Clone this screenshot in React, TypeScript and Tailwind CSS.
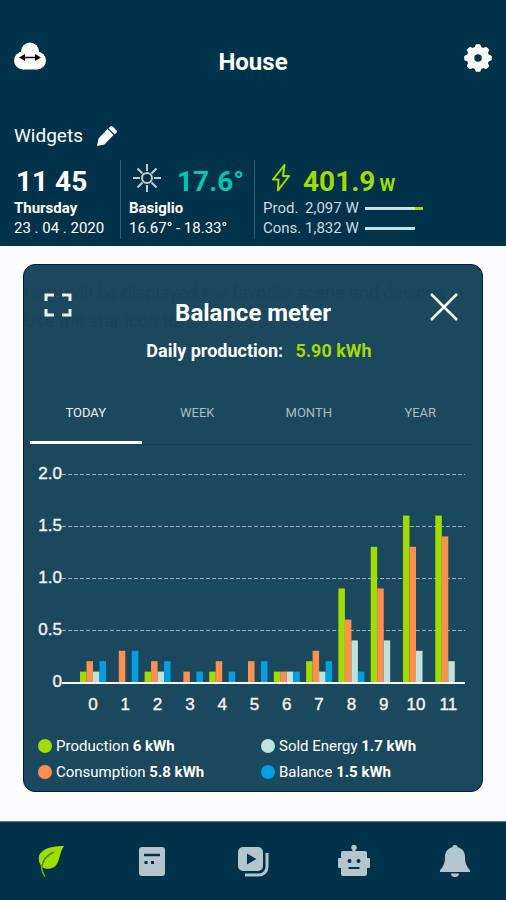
import React, { useState } from "react";
import clsx from "clsx";

type HourEntry = {
  production: number;
  consumption: number;
  sold: number;
  balance: number;
};

const hours: HourEntry[] = [
  { production: 0.1, consumption: 0.2, sold: 0.1, balance: 0.2 },
  { production: 0, consumption: 0.3, sold: 0, balance: 0.3 },
  { production: 0.1, consumption: 0.2, sold: 0.1, balance: 0.2 },
  { production: 0, consumption: 0.1, sold: 0, balance: 0.1 },
  { production: 0.1, consumption: 0.2, sold: 0, balance: 0.1 },
  { production: 0, consumption: 0.2, sold: 0, balance: 0.2 },
  { production: 0.1, consumption: 0.1, sold: 0.1, balance: 0.1 },
  { production: 0.2, consumption: 0.3, sold: 0.1, balance: 0.2 },
  { production: 0.9, consumption: 0.6, sold: 0.4, balance: 0.1 },
  { production: 1.3, consumption: 0.9, sold: 0.4, balance: 0 },
  { production: 1.6, consumption: 1.3, sold: 0.3, balance: 0 },
  { production: 1.6, consumption: 1.4, sold: 0.2, balance: 0 },
];

const series: { key: keyof HourEntry; color: string }[] = [
  { key: "production", color: "#a0dc00" },
  { key: "consumption", color: "#ff9052" },
  { key: "sold", color: "#bfe3da" },
  { key: "balance", color: "#009ee3" },
];

const legend = [
  { label: "Production", value: "6 kWh", dot: "bg-[#a0dc00]" },
  { label: "Sold Energy", value: "1.7 kWh", dot: "bg-[#bfe3da]" },
  { label: "Consumption", value: "5.8 kWh", dot: "bg-[#ff9052]" },
  { label: "Balance", value: "1.5 kWh", dot: "bg-[#009ee3]" },
];

const tabs = ["TODAY", "WEEK", "MONTH", "YEAR"];

const CloudIcon = () => (
  <svg viewBox="0 0 32 28" className="h-7 w-8">
    <circle cx="16" cy="9.500" r="9" fill="#fff" />
    <circle cx="9" cy="18.500" r="9" fill="#fff" />
    <circle cx="23" cy="18.500" r="9" fill="#fff" />
    <path d="M9 14h14v13.500H9z" fill="#fff" />
    <path d="M8 15.500h16" stroke="#000" strokeWidth="1.500" />
    <path d="M5 15.500l6-3.500v7zM27 15.500l-6-3.500v7z" fill="#000" />
  </svg>
);

const GearIcon = () => (
  <svg viewBox="0 0 28 28" className="size-7">
    <circle cx="14" cy="14" r="7.500" fill="none" stroke="#fff" strokeWidth="7.500" />
    {[0, 45, 90, 135, 180, 225, 270, 315].map((angle) => (
      <path
        key={angle}
        d="M10 5l1.500-4q.3-.8 1-.8h3q.7 0 1 .8L18 5z"
        fill="#fff"
        transform={`rotate(${angle} 14 14)`}
      />
    ))}
  </svg>
);

const PencilIcon = () => (
  <svg viewBox="0 0 20 20" className="size-5">
    <path d="M0 20l1.500-7.500L10.500 3l6 6L7.500 18.500z" fill="#fff" />
    <path d="M11.500 2.200l1.500-1.500q1.400-1.200 2.800 0l3.500 3.500q1.200 1.400 0 2.800L17.500 8.300z" fill="#fff" />
  </svg>
);

const SunIcon = () => (
  <svg viewBox="0 0 28 28" className="size-7" fill="none" stroke="#c3ccd3" strokeWidth="2">
    <circle cx="14" cy="14" r="5" />
    <path d="M14 0v7M14 21v7M0 14h7M21 14h7M4.500 4.500l5 5M18.500 18.500l5 5M4.500 23.500l5-5M18.500 9.500l5-5" />
  </svg>
);

const BoltIcon = () => (
  <svg viewBox="0 0 20 28" className="h-7 w-5" fill="none" stroke="#a0dc00" strokeWidth="2" strokeLinejoin="round">
    <path d="M13.500 1L2 15.500h5.500L7 26.500 18 12h-6z" />
  </svg>
);

const LeafIcon = () => (
  <svg viewBox="0 0 28 32" className="h-8 w-7">
    <path
      d="M27 1C15 .5 4 4 2 11c-1 4 .5 8 3 11 3 2.500 9 2.500 13-.5C23 17 22 8 27 1z"
      fill="#a0dc00"
    />
    <path d="M17 7C10 10 5.500 15 5 22" fill="none" stroke="#4c8420" strokeWidth="1.500" />
    <path d="M4.500 20c0 4 1 8 3.500 11.500" fill="none" stroke="#79ad18" strokeWidth="1.500" />
  </svg>
);

const PanelIcon = () => (
  <svg viewBox="0 0 28 32" className="h-8 w-7">
    <rect x="1" y="2" width="26" height="29" rx="3" fill="#b4c5ce" />
    <path d="M6 10h16" stroke="#003249" strokeWidth="2.500" />
    <path d="M6.500 17.500h3M13 17.500h3" stroke="#003249" strokeWidth="3" />
  </svg>
);

const ScenesIcon = () => (
  <svg viewBox="0 0 32 32" className="size-8">
    <path
      d="M30 8v14a8 8 0 0 1-8 8H8"
      fill="none"
      stroke="#b4c5ce"
      strokeWidth="3"
    />
    <rect x="1" y="2" width="25" height="24" rx="5" fill="#b4c5ce" />
    <path d="M10 8.500l9.500 5.500-9.500 5.500z" fill="#003249" />
  </svg>
);

const RobotIcon = () => (
  <svg viewBox="0 0 32 32" className="size-8">
    <path
      d="M14.500 6V5a2.800 2.800 0 1 1 3 0v1H27a2 2 0 0 1 2 2v5h2a1 1 0 0 1 1 1v8a1 1 0 0 1-1 1h-2v6a2 2 0 0 1-2 2H5a2 2 0 0 1-2-2v-6H1a1 1 0 0 1-1-1v-8a1 1 0 0 1 1-1h2V8a2 2 0 0 1 2-2z"
      fill="#b4c5ce"
    />
    <circle cx="11.500" cy="16" r="2" fill="#003249" />
    <circle cx="20.500" cy="16" r="2" fill="#003249" />
    <path d="M10.500 23h11" stroke="#003249" strokeWidth="2" />
  </svg>
);

const BellIcon = () => (
  <svg viewBox="0 0 30 32" className="h-8 w-8">
    <path
      d="M15 0c2 0 2.500 1 2.700 2.200 5 1.300 7.300 5 7.300 9.800 0 7 2 9.500 5 13.500V27H0v-1.500C3 21.500 5 19 5 12c0-4.800 2.300-8.500 7.300-9.800C12.500 1 13 0 15 0z"
      fill="#b4c5ce"
    />
    <path d="M11 28.500h8a4 3.500 0 0 1-8 0z" fill="#b4c5ce" />
  </svg>
);

const navItems = [
  { label: "Energy", icon: <LeafIcon /> },
  { label: "Devices", icon: <PanelIcon /> },
  { label: "Scenes", icon: <ScenesIcon /> },
  { label: "Automations", icon: <RobotIcon /> },
  { label: "Notifications", icon: <BellIcon /> },
];

const BalanceChart = () => {
  const baseline = 221;
  const unit = 104;
  const step = 32.3;
  const barWidth = 6.5;

  return (
    <svg
      viewBox="0 0 458 260"
      className="block w-full font-['Liberation_Sans',Arial,sans-serif] text-[17px]"
      role="img"
      aria-label="Energy per hour in kWh"
    >
      {[2, 1.5, 1, 0.5, 0].map((tick) => {
        const y = baseline - tick * unit;
        return (
          <g key={tick}>
            <text x="38" y={y + 5} textAnchor="end" fill="#eef3f6" stroke="#eef3f6" strokeWidth="0.4">
              {tick === 0 ? "0" : tick.toFixed(1)}
            </text>
            {tick > 0 && (
              <path d={`M38 ${y + 0.5}H441`} stroke="#9db2bc" strokeWidth="1" strokeDasharray="4 2" />
            )}
          </g>
        );
      })}
      {hours.map((hour, index) => (
        <g key={index}>
          {series.map(({ key, color }, i) => (
            <rect
              key={key}
              x={56 + index * step + i * barWidth}
              y={baseline - hour[key] * unit}
              width={barWidth}
              height={hour[key] * unit}
              fill={color}
            />
          ))}
          <text
            x={69 + index * step}
            y="249"
            textAnchor="middle"
            fill="#eef3f6"
            stroke="#eef3f6"
            strokeWidth="0.4"
          >
            {index}
          </text>
        </g>
      ))}
      <path d={`M38 ${baseline + 1}H441`} stroke="#f4f7fa" strokeWidth="2" />
    </svg>
  );
};

export default function App() {
  const [currentTab, setCurrentTab] = useState("TODAY");

  return (
    <div className="flex min-h-screen flex-col bg-[#fcfcff] font-[Roboto,'Open_Sans',sans-serif] text-white">
      <header className="bg-[#003249] pt-[38px] pb-[7px]">
        <div className="grid grid-cols-[32px_1fr_32px] items-center px-3.5">
          <button aria-label="Cloud connection" className="pb-2">
            <CloudIcon />
          </button>
          <h1 className="pt-1 text-center text-2xl leading-10 font-bold">House</h1>
          <button aria-label="Settings" className="flex justify-end pb-1">
            <GearIcon />
          </button>
        </div>

        <div className="flex items-center gap-3.5 px-3.5 pt-[38px]">
          <h2 className="text-[19px] leading-8">Widgets</h2>
          <button aria-label="Edit widgets">
            <PencilIcon />
          </button>
        </div>

        <div className="flex pt-2">
          <section className="w-[121px] border-r border-[#345a6c] pb-[3px] pl-3.5">
            <p className="pt-1 pl-0.5 text-[28px] leading-9 font-bold">11 45</p>
            <p className="text-[15px] leading-4 font-bold">Thursday</p>
            <p className="pt-1 text-[15px] leading-4">23 . 04 . 2020</p>
          </section>
          <section className="w-[134px] border-r border-[#345a6c] pl-2">
            <div className="flex items-start gap-4 pt-1 pl-1">
              <SunIcon />
              <p className="text-[28px] leading-9 font-bold text-[#00c5b0]">17.6°</p>
            </div>
            <p className="text-[15px] leading-4 font-bold">Basiglio</p>
            <p className="pt-1 text-[15px] leading-4">16.67° - 18.33°</p>
          </section>
          <section className="flex-1 pl-2">
            <div className="flex items-start gap-3 pt-1 pl-2">
              <BoltIcon />
              <p className="text-[28px] leading-9 font-bold text-[#a0dc00]">
                401.9<span className="pl-1 text-lg">W</span>
              </p>
            </div>
            <dl className="grid grid-cols-[42px_60px_1fr] items-center gap-y-1 text-[15px] leading-4 text-[#c8dce2]">
              <dt>Prod.</dt>
              <dd>2,097 W</dd>
              <dd className="flex">
                <span className="h-[3px] w-[50px] bg-[#c8e4e2]" />
                <span className="h-[3px] w-2 bg-[#a0dc00]" />
              </dd>
              <dt>Cons.</dt>
              <dd>1,832 W</dd>
              <dd className="h-[3px] w-[50px] bg-[#c8e4e2]" />
            </dl>
          </section>
        </div>
      </header>

      <main className="flex-1 px-[23px] pt-[18px] pb-7">
        <section className="relative overflow-hidden rounded-xl border border-[#001b49] bg-[#1b485c]">
          {/* dimmed page text behind the sheet */}
          <p className="absolute top-3.5 left-0 w-full text-lg leading-7 whitespace-nowrap text-[#194458]">
            Here will be displayed the favorite scene and devices
            <br />
            Use the star icon to
          </p>

          <div className="relative grid grid-cols-[28px_1fr_28px] items-start pt-6 pr-6 pl-5">
            <button aria-label="Full screen" className="pt-1">
              <svg viewBox="0 0 28 24" className="h-6 w-7" fill="none" stroke="#e9f2f5" strokeWidth="3">
                <path d="M2 8V2h8M18 2h8v6M26 16v6h-8M10 22H2v-6" />
              </svg>
            </button>
            <div className="text-center font-bold">
              <h2 className="pt-2 pl-1 text-2xl leading-8">Balance meter</h2>
              <p className="pt-2 pl-4 text-lg leading-7">
                Daily production: <span className="pl-2 text-[#a0dc00]">5.90 kWh</span>
              </p>
            </div>
            <button aria-label="Close" className="pt-1">
              <svg viewBox="0 0 28 28" className="size-7" stroke="#fff" strokeWidth="2.500">
                <path d="M1 1l26 26M27 1L1 27" />
              </svg>
            </button>
          </div>

          <div role="tablist" className="mx-1.5 mt-5 flex border-b border-[#174255]">
            {tabs.map((tab) => (
              <button
                key={tab}
                role="tab"
                aria-selected={tab === currentTab}
                onClick={() => setCurrentTab(tab)}
                className={clsx(
                  "flex-1 border-b-3 pt-4 pb-4 text-[13px] leading-6",
                  tab === currentTab ? "border-white text-[#eaf1f4]" : "border-transparent text-[#a9bcc5]"
                )}
              >
                {tab}
              </button>
            ))}
          </div>

          <div className="pt-4">
            <BalanceChart />
          </div>

          <ul className="grid grid-cols-[223px_1fr] gap-y-1 px-3.5 pt-3.5 pb-2 text-[15px] leading-[22px]">
            {legend.map((item) => (
              <li key={item.label} className="flex items-center gap-1 whitespace-nowrap">
                <span className={clsx("size-3.5 rounded-full", item.dot)} />
                <span>
                  {item.label} <b>{item.value}</b>
                </span>
              </li>
            ))}
          </ul>
        </section>
      </main>

      <nav className="flex border-t border-[#5b7483] bg-[#003249] py-[23px]">
        {navItems.map((item) => (
          <button key={item.label} aria-label={item.label} className="flex flex-1 justify-center">
            {item.icon}
          </button>
        ))}
      </nav>
    </div>
  );
}
